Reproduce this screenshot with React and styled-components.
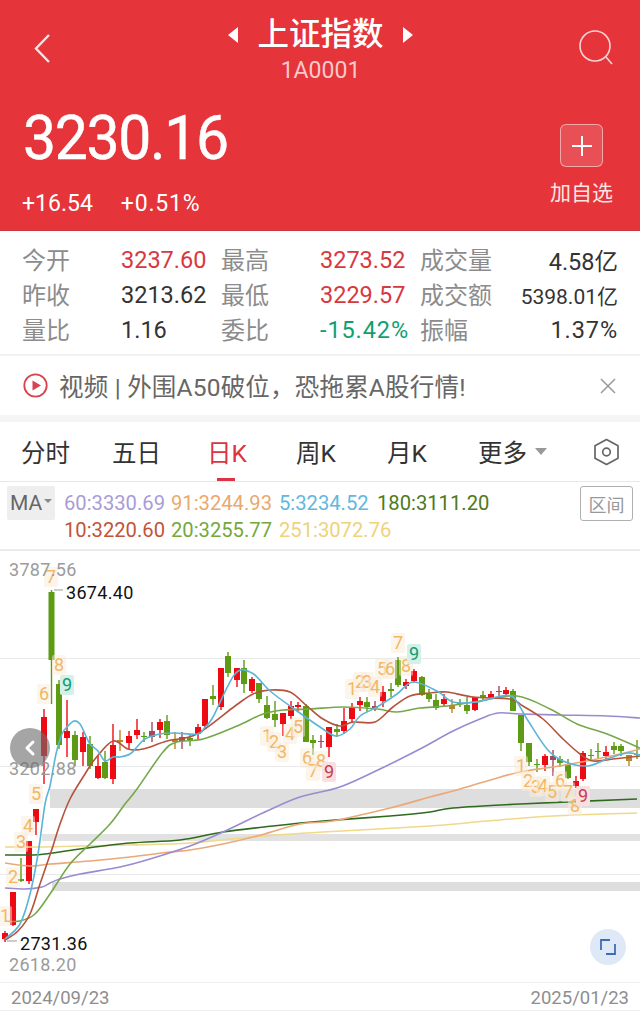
import React from 'react'
import styled, { createGlobalStyle } from 'styled-components'
import { ChevronLeft } from 'lucide-react'

const Global = createGlobalStyle`
  html, body { margin: 0; padding: 0; background: #fff; }
  body { font-family: Roboto, "Noto Sans CJK SC", sans-serif; }
`

const Page = styled.div`
  width: 640px;
  height: 1015px;
  overflow: hidden;
  background: #fff;
  display: flex;
  flex-direction: column;
`

/* ---------- red header ---------- */
const Header = styled.header`
  height: 231px;
  flex: none;
  background: #e5343a;
  color: #fff;
  display: flex;
  flex-direction: column;
  padding: 0 27px 0 23px;
  box-sizing: border-box;
  border-bottom: 1px solid #c9383c;
`
const TopBar = styled.div`
  height: 85px;
  flex: none;
  display: grid;
  grid-template-columns: 40px 1fr 40px;
  align-items: start;
`
const BackBtn = styled.svg`
  width: 20px;
  height: 32px;
  margin: 33px 0 0 10px;
`
const SearchBtn = styled.svg`
  width: 36px;
  height: 36px;
  margin: 30px 0 0 6px;
`
const TitleCol = styled.div`
  display: flex;
  flex-direction: column;
  align-items: center;
  padding: 15px 0 0 5px;
`
const TitleRow = styled.div`
  display: flex;
  align-items: center;
  gap: 18px;
  height: 40px;
`
const Title = styled.h1`
  margin: 0;
  font-size: 31.5px;
  line-height: 40px;
  font-weight: 500;
`
const Code = styled.div`
  font-size: 23px;
  line-height: 28px;
  margin-top: 2px;
  color: #f7c9cb;
`
const QuoteRow = styled.div`
  display: flex;
  justify-content: space-between;
`
const Price = styled.div`
  font-size: 62px;
  line-height: 62px;
  margin-top: 22px;
  font-weight: 400;
  letter-spacing: -1.4px;
  transform: scaleX(0.95);
  transform-origin: left center;
  -webkit-text-stroke: 0.5px #fff;
`
const Changes = styled.div`
  display: flex;
  gap: 28px;
  margin-top: 20px;
  font-size: 23px;
  line-height: 30px;
  margin-left: -1px;
  span:last-child {
    letter-spacing: 0.8px;
  }
`
const AddCol = styled.div`
  display: flex;
  flex-direction: column;
  align-items: center;
  margin-top: 39px;
`
const AddBox = styled.div`
  width: 43px;
  height: 43px;
  box-sizing: border-box;
  border-radius: 6px;
  border: 1px solid rgba(255, 255, 255, 0.5);
  background: rgba(255, 255, 255, 0.14);
  display: flex;
  align-items: center;
  justify-content: center;
`
const AddLabel = styled.div`
  font-size: 21px;
  line-height: 28px;
  margin-top: 12px;
  color: #fbe5e5;
`

/* ---------- stats ---------- */
const Stats = styled.section`
  height: 125px;
  flex: none;
  box-sizing: border-box;
  padding: 11px 22px 0;
  border-bottom: 2px solid #f1f1f1;
  display: grid;
  grid-template-columns: 99px 100px 99px 100px 100px 1fr;
  grid-auto-rows: 35px;
  align-items: center;
`
const StatLabel = styled.span`
  font-size: 24px;
  margin-top: -3px;
  color: #8c8c8c;
  white-space: nowrap;
`
const StatValue = styled.span`
  font-size: ${(p) => (p.$small ? '21px' : '23.5px')};
  color: ${(p) => p.$color || '#333'};
  text-align: ${(p) => (p.$right ? 'right' : 'left')};
  letter-spacing: ${(p) => (p.$spaced ? '0.9px' : '0')};
  white-space: nowrap;
`

/* ---------- news ---------- */
const News = styled.div`
  height: 59px;
  flex: none;
  box-sizing: border-box;
  padding: 0 24px 0 23px;
  display: flex;
  align-items: center;
  gap: 11px;
`
const NewsText = styled.div`
  flex: 1;
  font-size: 24.5px;
  letter-spacing: 0.2px;
  color: #666;
  white-space: nowrap;
`
const Band = styled.div`
  height: 7px;
  flex: none;
  background: #f5f5f5;
`

/* ---------- tabs ---------- */
const Tabs = styled.nav`
  height: 60px;
  flex: none;
  position: relative;
  box-sizing: border-box;
  border-bottom: 1px solid #e8e8e8;
  display: grid;
  grid-template-columns: 91px 95px 89px 91px 91px 114px 1fr;
  align-items: center;
  padding: 0 21px;
`
const Tab = styled.div`
  position: relative;
  height: 100%;
  display: flex;
  align-items: center;
  gap: 8px;
  font-size: 24.5px;
  color: ${(p) => (p.$active ? '#dc3442' : '#333')};
  &::after {
    content: '';
    display: ${(p) => (p.$active ? 'block' : 'none')};
    position: absolute;
    left: 10px;
    bottom: 0;
    width: 18px;
    height: 3px;
    background: #dc3442;
  }
`
const Caret = styled.span`
  width: 0;
  height: 0;
  border-left: 6px solid transparent;
  border-right: 6px solid transparent;
  border-top: 7px solid #999;
`
const SettingsIcon = styled.svg`
  justify-self: end;
  margin-right: -1px;
`

/* ---------- legend ---------- */
const Legend = styled.div`
  height: 68px;
  flex: none;
  box-sizing: border-box;
  padding: 4px 7px 0;
  display: flex;
  align-items: flex-start;
  border-bottom: 1px solid #ececec;
`
const MaBox = styled.div`
  width: 48px;
  height: 34px;
  flex: none;
  background: #eeeeee;
  border-radius: 2px;
  display: flex;
  align-items: center;
  justify-content: center;
  gap: 2px;
  font-size: 21px;
  color: #666;
`
const SmallCaret = styled.span`
  width: 0;
  height: 0;
  border-left: 4px solid transparent;
  border-right: 4px solid transparent;
  border-top: 4px solid #888;
  margin-top: -5px;
`
const MaValues = styled.div`
  margin-left: 9px;
  padding-top: 4px;
  display: grid;
  grid-template-columns: 107px 108px 98px auto;
`
const MaValue = styled.span`
  font-size: 20.2px;
  line-height: 27px;
  color: ${(p) => p.$color};
  white-space: nowrap;
`
const RangeBtn = styled.div`
  margin-left: auto;
  width: 53px;
  height: 35px;
  box-sizing: border-box;
  border: 1px solid #b0b0b0;
  border-radius: 3px;
  display: flex;
  align-items: center;
  justify-content: center;
  font-size: 18px;
  color: #999;
`

/* ---------- chart ---------- */
const ChartWrap = styled.div`
  position: relative;
  height: 432px;
  flex: none;
`
const ChartSvg = styled.svg`
  display: block;
  width: 640px;
  height: 432px;
`
const AxisText = styled.text`
  font-family: Roboto, sans-serif;
  font-size: 18px;
  letter-spacing: 0.3px;
  fill: ${(p) => p.$fill || '#9b9b9b'};
`
const TagText = styled.text`
  font-family: Roboto, sans-serif;
  font-size: 18px;
  text-anchor: middle;
  fill: ${(p) => p.$fill};
`
const ScrollBtn = styled.div`
  position: absolute;
  left: 10px;
  top: 178px;
  width: 40px;
  height: 40px;
  border-radius: 50%;
  background: rgba(110, 110, 110, 0.62);
  display: flex;
  align-items: center;
  justify-content: center;
`
const ExpandBtn = styled.div`
  position: absolute;
  left: 590px;
  top: 379px;
  width: 36px;
  height: 36px;
  border-radius: 50%;
  background: #dfe8f6;
  display: flex;
  align-items: center;
  justify-content: center;
`
const DateRow = styled.div`
  height: 29px;
  flex: none;
  box-sizing: border-box;
  padding: 2px 11px 0;
  display: flex;
  justify-content: space-between;
  align-items: center;
  font-size: 18.5px;
  color: #8e8e8e;
  border-top: 1px solid #eee;
  border-bottom: 1px solid #eee;
`

const R = '#ee0a13'
const G = '#5f9a14'
const P = '#a4485e'
const O = '#b8862c'

// x, body top, body bottom, wick top, wick bottom, colour
const candles = [
  [5, 934, 940, 932, 943, R], [13, 893, 926, 893, 927, R], [21, 880, 882, 859, 883, G],
  [29, 842, 882, 842, 885, R], [36, 810, 823, 810, 836, R], [44, 718, 757, 710, 785, R],
  [51.5, 593, 661, 591, 705, G], [59, 685, 746, 681, 750, G], [67, 732, 739, 701, 758, R],
  [75, 736, 761, 732, 767, G], [83, 738, 753, 733, 767, R], [90, 745, 767, 737, 770, G],
  [98, 767, 779, 757, 780, R], [105, 763, 779, 752, 780, G], [113, 746, 780, 725, 785, R],
  [120, 741, 743, 731, 752, O], [129, 737, 744, 732, 750, R], [137, 731, 736, 720, 740, R],
  [144, 737, 738, 733, 743, G], [152, 732, 738, 723, 743, P], [160, 723, 731, 720, 739, R],
  [167, 722, 736, 716, 740, G], [175, 740, 743, 733, 750, O], [182, 738, 742, 733, 750, P],
  [190, 739, 741, 735, 747, G], [198, 728, 735, 725, 740, R], [205, 700, 727, 700, 730, R],
  [213, 697, 700, 686, 706, G], [221, 669, 708, 669, 711, R], [228, 657, 674, 653, 678, G],
  [237, 669, 681, 669, 688, R], [244, 669, 685, 661, 694, G], [252, 680, 692, 678, 694, R],
  [259, 684, 700, 684, 704, G], [267, 706, 719, 697, 720, G], [275, 715, 721, 702, 728, G],
  [283, 714, 725, 714, 737, R], [291, 707, 717, 702, 720, R], [298, 706, 708, 703, 712, R],
  [306, 707, 743, 705, 743, G], [313, 741, 744, 736, 756, G], [321, 742, 743, 736, 749, P],
  [329, 728, 748, 728, 758, R], [337, 730, 733, 725, 738, G], [344, 722, 732, 709, 735, R],
  [352, 709, 720, 704, 724, R], [360, 702, 706, 698, 712, R], [367, 703, 708, 698, 713, G],
  [375, 707, 709, 702, 712, P], [383, 693, 702, 687, 708, R], [391, 690, 692, 684, 698, G],
  [398, 661, 686, 658, 688, G], [406, 683, 687, 680, 690, R], [414, 672, 682, 670, 684, R],
  [422, 678, 696, 677, 697, G], [429, 695, 700, 690, 703, G], [436, 701, 709, 695, 711, G],
  [444, 700, 705, 695, 707, R], [452, 706, 710, 700, 714, O], [460, 704, 705, 700, 708, G],
  [467, 706, 712, 698, 715, G], [475, 698, 711, 698, 712, R], [483, 696, 698, 692, 702, G],
  [491, 695, 698, 692, 700, R], [499, 692, 693, 687, 697, P], [506, 691, 695, 688, 696, R],
  [513, 692, 712, 690, 712, G], [521, 716, 744, 716, 752, G], [529, 744, 763, 744, 767, G],
  [537, 765, 766, 760, 773, G], [545, 757, 766, 755, 772, R], [553, 757, 761, 751, 777, P],
  [560, 760, 764, 757, 768, G], [568, 765, 779, 760, 780, G], [576, 782, 787, 777, 789, R],
  [583, 754, 780, 752, 782, R], [591, 756, 757, 750, 762, G], [598, 752, 753, 744, 760, G],
  [606, 753, 757, 747, 760, R], [614, 747, 751, 743, 755, G], [621, 747, 752, 745, 757, G],
  [629, 756, 762, 756, 767, O], [637, 755, 756, 741, 760, G],
]

const maLines = [
  { color: '#efd98a', pts: [[5, 848], [40, 848], [80, 847], [130, 846], [190, 844], [250, 838], [323, 833], [430, 827], [487, 822], [553, 817], [637, 814]] },
  { color: '#2f6b1f', pts: [[5, 856], [30, 856], [45, 855], [80, 850], [130, 844], [180, 841], [223, 833], [273, 827], [323, 822], [390, 817], [430, 813], [453, 809], [520, 805], [637, 800]] },
  { color: '#eba878', pts: [[5, 864], [30, 867], [50, 865], [90, 862], [130, 858], [170, 853], [190, 851], [223, 845], [257, 837], [300, 825], [333, 822], [390, 809], [430, 798], [453, 792], [487, 782], [520, 773], [553, 768], [587, 762], [620, 755], [640, 750]] },
  { color: '#9a8bd0', pts: [[5, 889], [25, 890], [42, 888], [50, 884], [60, 880], [80, 875], [120, 868], [150, 860], [190, 847], [223, 833], [267, 812], [300, 798], [340, 788], [380, 770], [420, 750], [453, 732], [480, 720], [498, 714], [520, 715], [560, 716], [607, 717], [640, 719]] },
  { color: '#76a84b', pts: [[5, 922], [20, 922], [35, 915], [50, 895], [70, 865], [90, 845], [110, 825], [125, 805], [137, 790], [163, 753], [177, 743], [203, 740], [237, 727], [263, 715], [283, 711], [310, 710], [343, 708], [377, 710], [397, 713], [420, 709], [447, 707], [480, 702], [517, 697], [550, 710], [577, 725], [607, 735], [640, 749]] },
  { color: '#b5533c', pts: [[5, 941], [18, 932], [30, 915], [40, 885], [52, 850], [60, 825], [70, 800], [85, 775], [95, 760], [113, 742], [128, 750], [143, 750], [167, 742], [197, 735], [235, 707], [253, 695], [270, 691], [290, 693], [307, 707], [323, 720], [340, 727], [353, 723], [375, 723], [393, 708], [410, 697], [430, 694], [447, 693], [473, 698], [510, 700], [523, 707], [543, 720], [563, 740], [580, 755], [593, 762], [613, 760], [640, 757]] },
  { color: '#5bb5d8', pts: [[5, 940], [20, 925], [30, 895], [38, 855], [45, 805], [50, 787], [56, 755], [62, 735], [67, 728], [74, 722], [80, 725], [85, 735], [90, 745], [98, 752], [105, 762], [113, 758], [120, 758], [130, 755], [137, 748], [145, 740], [160, 735], [175, 734], [198, 735], [205, 728], [213, 718], [235, 675], [252, 674], [270, 692], [297, 712], [320, 728], [336, 737], [350, 730], [360, 717], [377, 708], [397, 695], [413, 683], [437, 692], [453, 703], [477, 703], [497, 698], [513, 698], [527, 720], [547, 750], [563, 762], [587, 767], [607, 760], [627, 754], [640, 756]] },
]

const TAG = '#f2b766'
const tags = [
  ['1', 5, 917], ['2', 13, 878], ['3', 21, 843], ['4', 28, 827], ['5', 36, 795], ['6', 44, 695], ['7', 51, 578], ['8', 59, 666],
  ['9', 67, 686, 'up'],
  ['1', 267, 737], ['2', 274, 743], ['3', 282, 753], ['4', 290, 735], ['5', 298, 728], ['6', 307, 759], ['7', 313, 772], ['8', 321, 762],
  ['9', 329, 773, 'down'],
  ['1', 352, 690], ['2', 360, 683], ['3', 367, 683], ['4', 375, 688], ['5', 382, 670], ['6', 390, 670], ['7', 398, 644], ['8', 406, 667],
  ['9', 414, 655, 'up'],
  ['1', 521, 767], ['2', 528, 782], ['3', 536, 788], ['4', 543, 787], ['5', 552, 793], ['6', 560, 782], ['7', 568, 793], ['8', 575, 807],
  ['9', 583, 797, 'down'],
]

// catmull-rom through the sampled points so the averages look smooth
const smooth = (pts) => {
  let d = `M${pts[0][0]} ${pts[0][1]}`
  for (let i = 0; i < pts.length - 1; i++) {
    const p0 = pts[i - 1] || pts[i]
    const p1 = pts[i]
    const p2 = pts[i + 1]
    const p3 = pts[i + 2] || p2
    const c1x = p1[0] + (p2[0] - p0[0]) / 6
    const c1y = p1[1] + (p2[1] - p0[1]) / 6
    const c2x = p2[0] - (p3[0] - p1[0]) / 6
    const c2y = p2[1] - (p3[1] - p1[1]) / 6
    d += ` C${c1x} ${c1y} ${c2x} ${c2y} ${p2[0]} ${p2[1]}`
  }
  return d
}

const Chart = () => (
  <ChartSvg viewBox="0 551 640 432">
    {[551.5, 659.5, 767.5, 875.5].map((y) => (
      <line key={y} x1="0" x2="640" y1={y} y2={y} stroke="#e9e9e9" />
    ))}
    <rect x="50" y="790" width="590" height="19" fill="#dedede" />
    <rect x="42" y="835" width="598" height="7" fill="#e2e2e2" />
    <rect x="52" y="883" width="588" height="9" fill="#dedede" />

    {candles.map(([x, t, b, wt, wb, c]) => (
      <g key={x} fill={c}>
        <rect x={x - 0.7} y={wt} width="1.4" height={wb - wt} />
        <rect x={x - 3} y={t} width="6" height={b - t} />
      </g>
    ))}
    {maLines.map((l) => (
      <path key={l.color} d={smooth(l.pts)} fill="none" stroke={l.color} strokeWidth="1.6" strokeLinejoin="round" />
    ))}

    {tags.map(([n, x, y, kind], i) => (
      <g key={i}>
        <rect
          x={x - 7}
          y={y - 10}
          width="14"
          height="20"
          rx="2"
          fill={kind === 'up' ? '#d5f0e6' : kind === 'down' ? '#fadfe0' : 'rgba(250, 236, 216, 0.5)'}
        />
        <TagText x={x} y={y + 6} $fill={kind === 'up' ? '#0f9d74' : kind === 'down' ? '#c2404f' : TAG}>{n}</TagText>
      </g>
    ))}

    <line x1="54" x2="63" y1="591" y2="591" stroke="#999" />
    <line x1="7" x2="17" y1="942" y2="942" stroke="#999" />
    <AxisText x="9" y="577">3787.56</AxisText>
    <AxisText x="9" y="776">3202.88</AxisText>
    <AxisText x="9" y="972">2618.20</AxisText>
    <AxisText x="66" y="600" $fill="#111">3674.40</AxisText>
    <AxisText x="20" y="951" $fill="#111">2731.36</AxisText>
  </ChartSvg>
)

const stats = [
  ['今开', '3237.60', '#d8383f', '最高', '3273.52', '#d8383f', '成交量', '4.58亿'],
  ['昨收', '3213.62', '#333', '最低', '3229.57', '#d8383f', '成交额', '5398.01亿', true],
  ['量比', '1.16', '#333', '委比', '-15.42%', '#10a070', '振幅', '1.37%'],
]

const maValues = [
  ['60:3330.69', '#a99bd6'], ['91:3244.93', '#e9a96f'], ['5:3234.52', '#63b8dd'], ['180:3111.20', '#4d7a1c'],
  ['10:3220.60', '#c1533a'], ['20:3255.77', '#74a93a'], ['251:3072.76', '#efd27a'],
]

const App = () => (
  <Page>
    <Global />
    <Header>
      <TopBar>
        <BackBtn viewBox="0 0 20 32">
          <path d="M16 2 L3 15.5 L16 29" fill="none" stroke="#fbe3e3" strokeWidth="2.4" />
        </BackBtn>
        <TitleCol>
          <TitleRow>
            <svg width="12" height="16" viewBox="0 0 12 16"><path d="M11 0 V16 L1 8Z" fill="#fff" /></svg>
            <Title>上证指数</Title>
            <svg width="12" height="16" viewBox="0 0 12 16"><path d="M1 0 V16 L11 8Z" fill="#fff" /></svg>
          </TitleRow>
          <Code>1A0001</Code>
        </TitleCol>
        <SearchBtn viewBox="0 0 36 36">
          <circle cx="16" cy="16" r="15" fill="none" stroke="#f8d3d3" strokeWidth="1.6" />
          <path d="M27 27 L33 34" stroke="#f8d3d3" strokeWidth="1.6" />
        </SearchBtn>
      </TopBar>
      <QuoteRow>
        <div>
          <Price>3230.16</Price>
          <Changes>
            <span>+16.54</span>
            <span>+0.51%</span>
          </Changes>
        </div>
        <AddCol>
          <AddBox>
            <svg width="22" height="22" viewBox="0 0 22 22"><path d="M11 1 V21 M1 11 H21" stroke="#fff" strokeWidth="2" /></svg>
          </AddBox>
          <AddLabel>加自选</AddLabel>
        </AddCol>
      </QuoteRow>
    </Header>

    <Stats>
      {stats.map((s) => (
        <React.Fragment key={s[0]}>
          <StatLabel>{s[0]}</StatLabel>
          <StatValue $color={s[2]}>{s[1]}</StatValue>
          <StatLabel>{s[3]}</StatLabel>
          <StatValue $color={s[5]} $spaced={s[4].endsWith('%')}>{s[4]}</StatValue>
          <StatLabel>{s[6]}</StatLabel>
          <StatValue $right $small={s[8]} $spaced={s[7].endsWith('%')}>{s[7]}</StatValue>
        </React.Fragment>
      ))}
    </Stats>

    <News>
      <svg width="25" height="25" viewBox="0 0 25 25">
        <circle cx="12.5" cy="12.5" r="11.2" fill="none" stroke="#d9434f" strokeWidth="1.8" />
        <path d="M9.5 7.5 L18 12.5 L9.5 17.5Z" fill="#d9434f" />
      </svg>
      <NewsText>{'视频 | 外围A50破位\uFF0C恐拖累A股行情!'}</NewsText>
      <svg width="16" height="16" viewBox="0 0 16 16"><path d="M1 1 L15 15 M15 1 L1 15" stroke="#999" strokeWidth="1.5" /></svg>
    </News>
    <Band />

    <Tabs>
      <Tab>分时</Tab>
      <Tab>五日</Tab>
      <Tab $active>日K</Tab>
      <Tab>周K</Tab>
      <Tab>月K</Tab>
      <Tab>更多<Caret /></Tab>
      <SettingsIcon width="27" height="28" viewBox="0 0 27 28">
        <path d="M13.5 1.5 L25 7.8 V20.2 L13.5 26.5 L2 20.2 V7.8Z" fill="none" stroke="#666" strokeWidth="1.7" strokeLinejoin="round" />
        <circle cx="13.5" cy="14" r="3.8" fill="none" stroke="#666" strokeWidth="1.7" />
      </SettingsIcon>
    </Tabs>

    <Legend>
      <MaBox>MA<SmallCaret /></MaBox>
      <MaValues>
        {maValues.map(([t, c]) => (
          <MaValue key={t} $color={c}>{t}</MaValue>
        ))}
      </MaValues>
      <RangeBtn>区间</RangeBtn>
    </Legend>

    <ChartWrap>
      <Chart />
      <ScrollBtn><ChevronLeft size={24} color="#fff" strokeWidth={3} /></ScrollBtn>
      <ExpandBtn>
        <svg width="18" height="18" viewBox="0 0 18 18">
          <path d="M11 2 H2 V12 M7 16 H16 V6" fill="none" stroke="#3f6db5" strokeWidth="1.8" />
        </svg>
      </ExpandBtn>
    </ChartWrap>
    <DateRow>
      <span>2024/09/23</span>
      <span>2025/01/23</span>
    </DateRow>
  </Page>
)

export default App
